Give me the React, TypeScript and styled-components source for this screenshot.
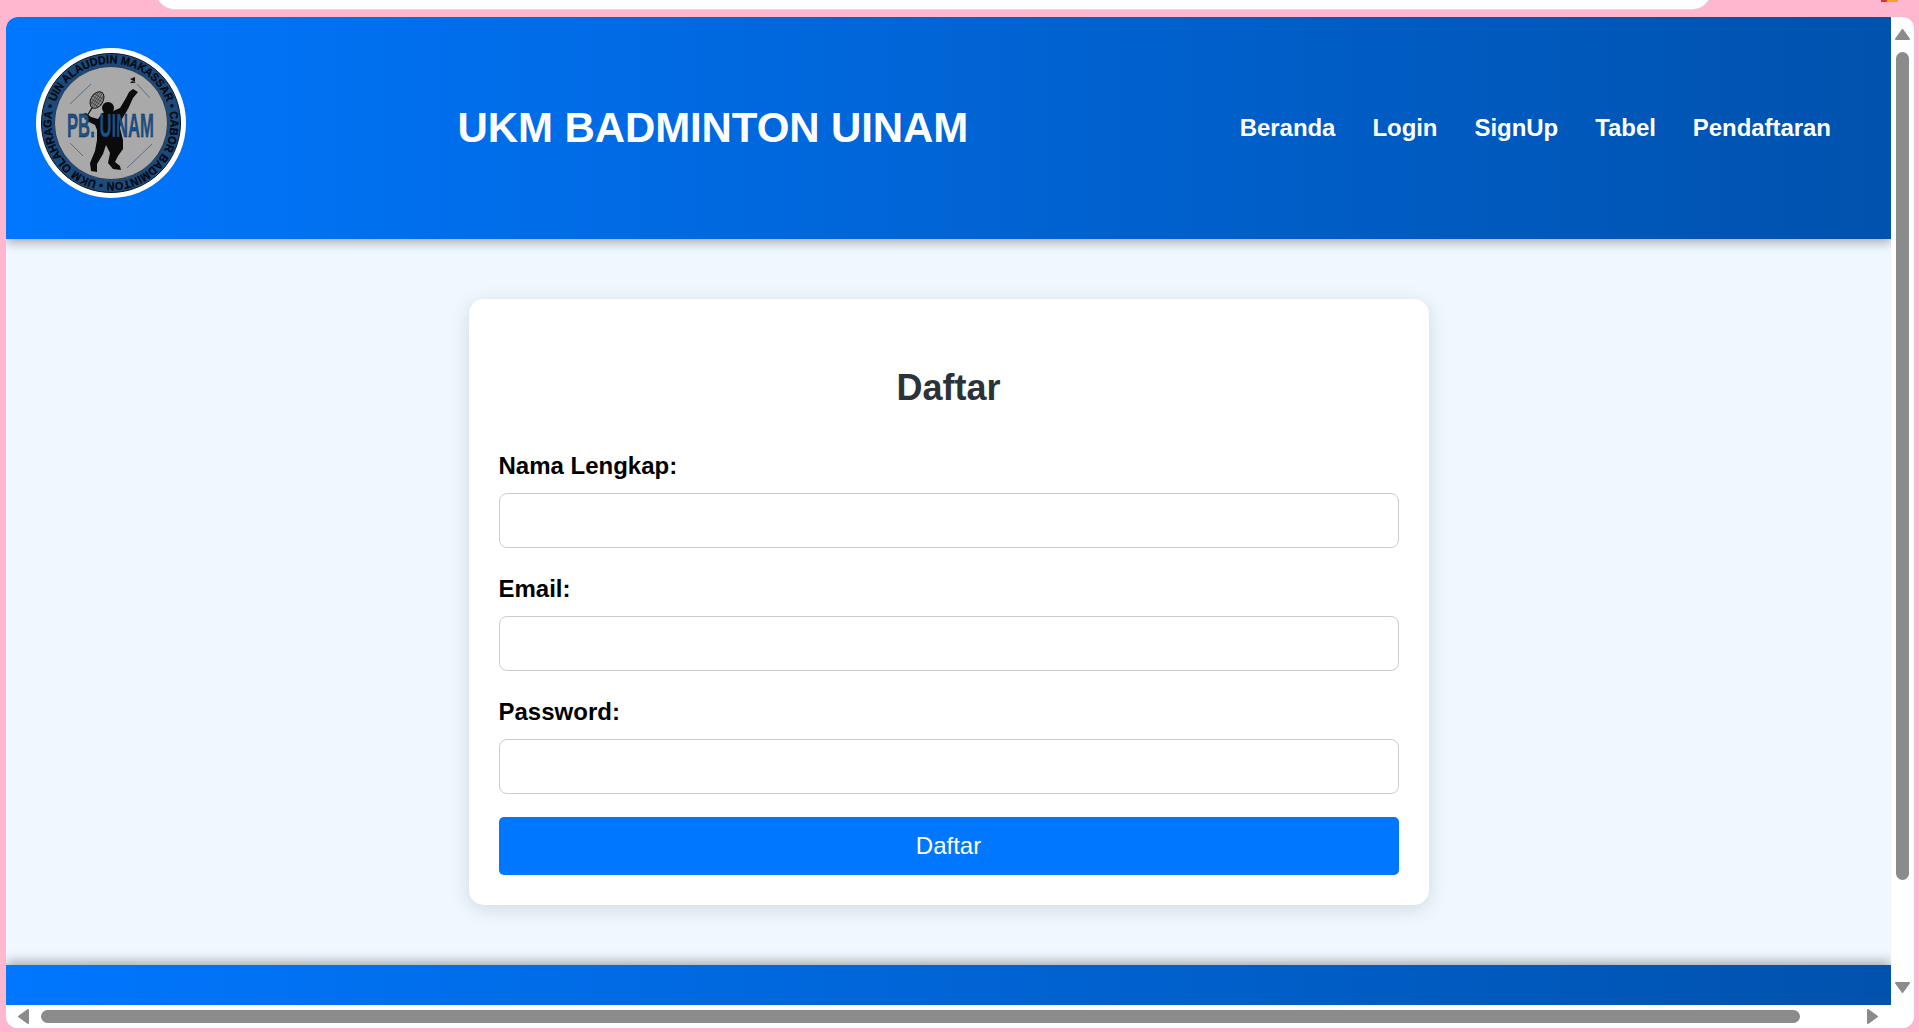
import React from "react";
import styled, { createGlobalStyle } from "styled-components";

const GlobalStyle = createGlobalStyle`
    * {
        box-sizing: border-box;
    }
    html, body {
        margin: 0;
        height: 100%;
        overflow: hidden;
    }
    body {
        background: #ffb6cf;
        font-family: "Liberation Sans", Arial, sans-serif;
    }
`;

const Logo = () => (
    <LogoSvg viewBox="0 0 150 150">
        <circle cx="75" cy="75" r="75" fill="#fff" />
        <circle cx="75" cy="75" r="69.5" fill="#1b4a7e" stroke="#0a1420" strokeWidth="1" />
        <circle cx="75" cy="75" r="56.5" fill="#a9a9a9" stroke="#111" strokeWidth="0.6" />
        <defs>
            <path id="ring" d="M19.3 54 A59.5 59.5 0 1 1 130.7 96 A59.5 59.5 0 1 1 19.3 54" />
        </defs>
        <text
            fontFamily="'Liberation Sans', sans-serif"
            fontSize="11.5"
            fontWeight="700"
            fill="#03090f"
            stroke="#03090f"
            strokeWidth="0.25"
        >
            <textPath href="#ring" textLength="370" lengthAdjust="spacingAndGlyphs">
                UIN ALAUDDIN MAKASSAR • CABOR BADMINTON • UKM OLAHRAGA •
            </textPath>
        </text>
        <g stroke="#1b4a7e" strokeWidth="0.6">
            <line x1="34" y1="56" x2="55" y2="36" />
            <line x1="101" y1="36" x2="114" y2="50" />
            <line x1="34" y1="95" x2="47" y2="108" />
            <line x1="91" y1="120" x2="116" y2="96" />
        </g>
        <path d="M94 31 L99 29 L99 34 Z M96 33 L100 35 L94 35 Z" fill="#111" />
        <g transform="rotate(32 61 52)">
            <ellipse cx="61" cy="52" rx="6" ry="9" fill="#8d8d8d" stroke="#111" strokeWidth="1" />
            <path d="M58 45V59M60 43.5V60.5M62 43.5V60.5M64 45V59M55.5 48H66.5M55.5 51H66.5M55.5 54H66.5M56 57H66" stroke="#222" strokeWidth="0.5" />
            <line x1="61" y1="61" x2="61" y2="75" stroke="#111" strokeWidth="1.2" />
        </g>
        <circle cx="72" cy="60" r="6" fill="#0b0b0b" />
        <path
            d="M97 41 L102 44 L97 50 L92 61 L86 71 L84 80 L87 92 L87 101 L82 108 L79 114 L84 118 L85 122 L77 121 L72 115 L74 105 L70 97 L67 106 L61 116 L61 124 L55 123 L54 115 L59 103 L61 92 L61 82 L59 77 L51 73 L47 66 L50 65 L55 69 L62 71 L66 65 L77 63 L84 60 L90 50 L93 44 Z"
            fill="#0b0b0b"
        />
        <text
            x="31"
            y="89"
            fontFamily="'Liberation Sans', sans-serif"
            fontSize="33"
            fontWeight="700"
            fill="#1b5088"
            stroke="#123"
            strokeWidth="0.3"
            textLength="87"
            lengthAdjust="spacingAndGlyphs"
        >
            PB. UINAM
        </text>
    </LogoSvg>
);

const Arrow = ({ points, width, height }: { points: string; width: number; height: number }) => (
    <ArrowSvg viewBox={`0 0 ${width} ${height}`} $width={width} $height={height}>
        <polygon points={points} fill="#8b8b8b" stroke="#8b8b8b" strokeWidth="2" strokeLinejoin="round" />
    </ArrowSvg>
);

const App = () => {
    return (
        <>
            <GlobalStyle />
            <BrowserPill />
            <TabSpark />
            <Window>
                <Page>
                    <Header>
                        <Logo />
                        <SiteTitle>UKM BADMINTON UINAM</SiteTitle>
                        <Nav>
                            {["Beranda", "Login", "SignUp", "Tabel", "Pendaftaran"].map((item) => (
                                <NavLink key={item}>{item}</NavLink>
                            ))}
                        </Nav>
                    </Header>
                    <Main>
                        <Card>
                            <CardTitle>Daftar</CardTitle>
                            {["Nama Lengkap:", "Email:", "Password:"].map((label) => (
                                <Field key={label}>
                                    <Label>{label}</Label>
                                    <Input type="text" />
                                </Field>
                            ))}
                            <SubmitButton>Daftar</SubmitButton>
                        </Card>
                    </Main>
                    <Footer />
                </Page>
                <VerticalRail>
                    <Arrow width={15} height={11} points="7.5,1 14,10 1,10" />
                    <VerticalThumb />
                    <Arrow width={15} height={11} points="1,1 14,1 7.5,10" />
                </VerticalRail>
                <HorizontalRail>
                    <Arrow width={11} height={15} points="10,1 10,14 1,7.5" />
                    <HorizontalThumb />
                    <Arrow width={11} height={15} points="1,1 1,14 10,7.5" />
                </HorizontalRail>
                <Corner />
            </Window>
        </>
    );
};

const BrowserPill = styled.div`
    position: absolute;
    top: -20px;
    left: 155px;
    width: 1557px;
    height: 30px;
    background: #fff;
    border: 1px solid #dcdcdc;
    border-radius: 0 0 20px 20px;
`;

const TabSpark = styled.div`
    position: absolute;
    top: 0;
    left: 1881px;
    width: 17px;
    height: 2px;
    background: linear-gradient(90deg, #e0302c 30%, #f5a030 40%);
`;

const Window = styled.div`
    margin: 17px 0 0 6px;
    width: 1908px;
    height: 1011px;
    display: grid;
    grid-template-columns: 1885px 23px;
    grid-template-rows: 988px 23px;
    background: #fff;
    border-radius: 12px;
    overflow: hidden;
`;

const Page = styled.div`
    display: flex;
    flex-direction: column;
    background: #f0f8ff;
    overflow: hidden;
`;

const Header = styled.header`
    position: relative;
    z-index: 1;
    height: 222px;
    flex-shrink: 0;
    display: flex;
    align-items: center;
    justify-content: space-between;
    padding: 0 60px 0 30px;
    background: linear-gradient(90deg, #0077ff, #0052ad);
    box-shadow: 0 4px 10px rgba(0, 0, 0, 0.3);
`;

const LogoSvg = styled.svg`
    display: block;
    width: 150px;
    height: 150px;
    margin-bottom: 11px;
`;

const SiteTitle = styled.h1`
    margin: 0;
    font-size: 42px;
    font-weight: 700;
    letter-spacing: -0.1px;
    color: #fff;
`;

const Nav = styled.nav`
    display: flex;
    gap: 37px;
`;

const NavLink = styled.a`
    font-size: 24px;
    font-weight: 700;
    letter-spacing: -0.05px;
    color: #fff;
`;

const Main = styled.main`
    flex: 1;
    display: flex;
    justify-content: center;
    padding-top: 60px;
`;

const Card = styled.div`
    width: 960px;
    height: 606px;
    padding: 68px 30px 30px;
    background: #fff;
    border-radius: 15px;
    box-shadow: 0 4px 20px rgba(0, 0, 0, 0.13);
`;

const CardTitle = styled.h2`
    margin: 0 0 44px;
    font-size: 36px;
    line-height: 41px;
    font-weight: 700;
    text-align: center;
    color: #2c3338;
`;

const Field = styled.div`
    margin-bottom: 27px;
    &:nth-of-type(3) {
        margin-bottom: 23px;
    }
`;

const Label = styled.label`
    display: block;
    margin-bottom: 14px;
    font-size: 24px;
    line-height: 27px;
    font-weight: 700;
    color: #000;
`;

const Input = styled.input`
    display: block;
    width: 100%;
    height: 55px;
    padding: 12px;
    background: #fff;
    border: 1px solid #ccc;
    border-radius: 8px;
`;

const SubmitButton = styled.button`
    display: block;
    width: 100%;
    height: 58px;
    border: none;
    border-radius: 5px;
    background: #0077ff;
    color: #fff;
    font-family: inherit;
    font-size: 24px;
`;

const Footer = styled.footer`
    position: relative;
    height: 40px;
    flex-shrink: 0;
    background: linear-gradient(90deg, #0077ff, #0052ad);
    box-shadow: 0 -4px 10px rgba(0, 0, 0, 0.3);
`;

const VerticalRail = styled.div`
    display: flex;
    flex-direction: column;
    align-items: center;
    padding: 12px 4px 12px 4px;
    background: #fff;
`;

const VerticalThumb = styled.div`
    width: 13px;
    height: 828px;
    margin: 12px 0 auto;
    background: #8b8b8b;
    border-radius: 7px;
`;

const HorizontalRail = styled.div`
    display: flex;
    align-items: center;
    padding: 0 13px 0 12px;
    background: #fff;
`;

const HorizontalThumb = styled.div`
    width: 1759px;
    height: 13px;
    margin: 0 auto 0 12px;
    background: #8b8b8b;
    border-radius: 7px;
`;

const Corner = styled.div`
    background: #fff;
`;

const ArrowSvg = styled.svg<{ $width: number; $height: number }>`
    display: block;
    flex-shrink: 0;
    width: ${(props) => props.$width}px;
    height: ${(props) => props.$height}px;
`;

export default App;
